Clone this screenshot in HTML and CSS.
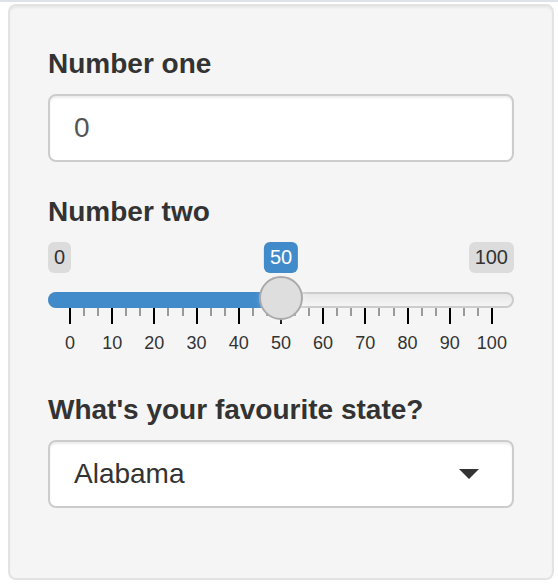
FILE: index.html
```html
<!DOCTYPE html>
<html lang="en">
<head>
<meta charset="utf-8">
<title>Inputs</title>
<link rel="stylesheet" href="styles.css">
</head>
<body>
<div class="topbar"></div>
<form class="well">
  <div class="form-group">
    <label class="control-label" for="num1">Number one</label>
    <input class="form-control" id="num1" type="number" value="0">
  </div>
  <div class="form-group">
    <label class="control-label">Number two</label>
    <div class="irs" style="--v:0.5">
      <div class="irs-labels">
        <span class="irs-min">0</span>
        <span class="irs-max">100</span>
        <span class="irs-single">50</span>
      </div>
      <div class="irs-track">
        <div class="irs-bar"></div>
        <span class="irs-handle"></span>
      </div>
      <div class="irs-ticks"></div>
      <div class="irs-nums">
        <span>0</span><span>10</span><span>20</span><span>30</span><span>40</span><span>50</span><span>60</span><span>70</span><span>80</span><span>90</span><span>100</span>
      </div>
    </div>
  </div>
  <div class="form-group">
    <label class="control-label">What's your favourite state?</label>
    <div class="select">
      <span class="select-value">Alabama</span>
      <span class="caret"></span>
    </div>
  </div>
</form>
</body>
</html>
```
FILE: styles.css
```css
* { box-sizing: border-box; }
html, body { margin: 0; background: #fff; }
body {
  font-family: "Liberation Sans", Arial, sans-serif;
  color: #333;
  width: 558px;
  height: 586px;
  overflow: hidden;
}
.topbar { height: 2px; background: #dfe3e8; }
.well {
  margin: 2px 4px 0 8px;
  width: 546px;
  height: 576px;
  padding: 38px;
  background: #f5f5f5;
  border: 2px solid #e3e3e3;
  border-radius: 8px;
  box-shadow: inset 0 2px 2px rgba(0, 0, 0, 0.05);
}
.form-group { margin-bottom: 30px; }
.control-label {
  display: block;
  font-size: 28px;
  line-height: 40px;
  font-weight: bold;
  margin-bottom: 10px;
}
.form-control {
  display: block;
  width: 100%;
  height: 68px;
  padding: 12px 24px;
  font-family: "Liberation Sans", Arial, sans-serif;
  font-size: 28px;
  line-height: 40px;
  color: #555;
  background: #fff;
  border: 2px solid #ccc;
  border-radius: 8px;
  box-shadow: inset 0 2px 2px rgba(0, 0, 0, 0.075);
  outline: none;
  -moz-appearance: textfield;
}
.form-control::-webkit-inner-spin-button,
.form-control::-webkit-outer-spin-button { -webkit-appearance: none; margin: 0; }

/* slider */
.irs { height: 118px; }
.irs-labels {
  position: relative;
  display: flex;
  justify-content: space-between;
  align-items: flex-start;
  height: 31px;
}
.irs-min, .irs-max, .irs-single {
  font-size: 20px;
  line-height: 26.67px;
  padding: 2px 6px;
  border-radius: 6px;
  white-space: nowrap;
}
.irs-min, .irs-max { background: rgba(0, 0, 0, 0.1); color: #333; }
.irs-single {
  position: absolute;
  top: 0;
  left: calc(22px + (100% - 44px) * var(--v));
  transform: translateX(-50%);
  background: #428bca;
  color: #fff;
}
.irs-track {
  position: relative;
  margin-top: 19px;
  height: 16px;
  border-radius: 16px;
  background: linear-gradient(to bottom, #ddd -50%, #fff 150%);
  box-shadow: inset 0 0 0 2px #ccc;
}
.irs-bar {
  position: absolute;
  left: 0;
  top: 0;
  height: 16px;
  width: calc(22px + (100% - 44px) * var(--v));
  background: #428bca;
  border-radius: 16px 0 0 16px;
}
.irs-handle {
  position: absolute;
  top: -16px;
  left: calc(22px + (100% - 44px) * var(--v));
  margin-left: -22px;
  width: 44px;
  height: 44px;
  border: 2px solid #aaa;
  border-radius: 50%;
  background: #dedede;
  box-shadow: 2px 2px 6px rgba(255, 255, 255, 0.3);
}
.irs-ticks {
  margin-left: 21px;
  width: 424px;
  height: 16px;
  background:
    repeating-linear-gradient(to right, #000 0 2px, transparent 2px 42.2px) top left / 100% 16px no-repeat,
    repeating-linear-gradient(to right, #999 0 2px, transparent 2px 14.0667px) top left / 100% 8px no-repeat;
}
.irs-nums {
  display: flex;
  justify-content: space-between;
  margin: 9px 0 0 21px;
  width: 424px;
}
.irs-nums span {
  width: 2px;
  display: flex;
  justify-content: center;
  font-size: 18px;
  line-height: 20px;
  white-space: nowrap;
  color: #333;
}

/* select */
.select {
  display: flex;
  align-items: center;
  justify-content: space-between;
  height: 68px;
  padding: 12px 24px;
  background: #fff;
  border: 2px solid #ccc;
  border-radius: 8px;
  box-shadow: inset 0 2px 2px rgba(0, 0, 0, 0.075);
  font-size: 28px;
  line-height: 40px;
  color: #333;
}
.caret {
  width: 0;
  height: 0;
  border-style: solid;
  border-width: 10px 10px 0 10px;
  border-color: #333 transparent transparent transparent;
  margin-right: 9px;
}
```
